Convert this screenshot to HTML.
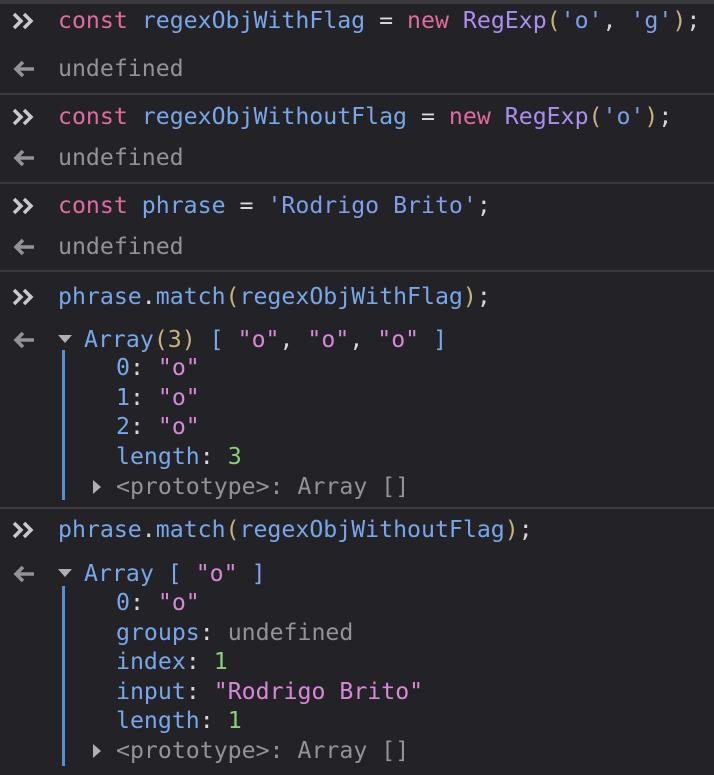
<html><head><style>
body{margin:0;background:#232327;width:714px;height:775px;overflow:hidden;position:relative;font-family:"DejaVu Sans Mono","Liberation Mono",monospace;font-size:23.2px;color:#d7d7db}
.l{position:absolute;left:58px;height:30px;line-height:30px;white-space:pre}
.c{left:116px}
.sep{position:absolute;left:0;width:714px;height:2px;background:#3a3a3f}
.k{color:#e26aa0}.i{color:#77a7ea}.f{color:#ab8ef2}.s{color:#7b9fe8}.p{color:#c8b27c}.o{color:#d888d8}.n{color:#86d274}.u{color:#939397}.w{color:#d7d7db}
.vl{position:absolute;left:62px;width:3px;background:#5a8fd0}
.proto{color:#939397}
</style></head><body>
<div class="sep" style="top:0;height:4px"></div>
<div class="sep" style="top:93px"></div>
<div class="sep" style="top:182px"></div>
<div class="sep" style="top:270px"></div>
<div class="sep" style="top:507px"></div>

<svg width="714" height="775" style="position:absolute;left:0;top:0" fill="none" stroke="#c9c9cd" stroke-width="3.5">
<g id="in"><path d="M14 14l7 7-7 7M24 14l7 7-7 7"/></g>
<use href="#in" y="96"/><use href="#in" y="185"/><use href="#in" y="276"/><use href="#in" y="509"/>
<g id="out" stroke="#939397"><path d="M34 69H16M23 62l-7 7 7 7"/></g>
<use href="#out" y="89"/><use href="#out" y="178"/><use href="#out" y="271"/><use href="#out" y="505"/>
<path d="M58 335h14l-7 8z M58 569h14l-7 8z" fill="#b0b0b4" stroke="none"/>
<path d="M93 480v14l8-7z M93 744v14l8-7z" fill="#b0b0b4" stroke="none"/>
</svg>
<div class="vl" style="top:350px;height:150px"></div>
<div class="vl" style="top:586px;height:180px"></div>

<div class="l" style="top:6px"><span class="k">const</span> <span class="i">regexObjWithFlag</span> = <span class="k">new</span> <span class="f">RegExp</span><span class="p">(</span><span class="s">'o'</span>, <span class="s">'g'</span><span class="p">)</span>;</div>
<div class="l u" style="top:54px">undefined</div>
<div class="l" style="top:102px"><span class="k">const</span> <span class="i">regexObjWithoutFlag</span> = <span class="k">new</span> <span class="f">RegExp</span><span class="p">(</span><span class="s">'o'</span><span class="p">)</span>;</div>
<div class="l u" style="top:143px">undefined</div>
<div class="l" style="top:191px"><span class="k">const</span> <span class="i">phrase</span> = <span class="s">'Rodrigo Brito'</span>;</div>
<div class="l u" style="top:232px">undefined</div>
<div class="l" style="top:282px"><span class="i">phrase</span>.<span class="i">match</span><span class="p">(</span><span class="i">regexObjWithFlag</span><span class="p">)</span>;</div>
<div class="l" style="top:325px;left:84px"><span class="i">Array</span><span class="p">(3)</span> <span class="i">[</span> <span class="o">"o"</span>, <span class="o">"o"</span>, <span class="o">"o"</span> <span class="i">]</span></div>
<div class="l c" style="top:353px"><span class="i">0</span>: <span class="o">"o"</span></div>
<div class="l c" style="top:383px"><span class="i">1</span>: <span class="o">"o"</span></div>
<div class="l c" style="top:412px"><span class="i">2</span>: <span class="o">"o"</span></div>
<div class="l c" style="top:442px"><span class="i">length</span>: <span class="n">3</span></div>
<div class="l c proto" style="top:472px">&lt;prototype&gt;: Array []</div>
<div class="l" style="top:515px"><span class="i">phrase</span>.<span class="i">match</span><span class="p">(</span><span class="i">regexObjWithoutFlag</span><span class="p">)</span>;</div>
<div class="l" style="top:559px;left:84px"><span class="i">Array</span> <span class="i">[</span> <span class="o">"o"</span> <span class="i">]</span></div>
<div class="l c" style="top:588px"><span class="i">0</span>: <span class="o">"o"</span></div>
<div class="l c" style="top:618px"><span class="i">groups</span>: <span class="u">undefined</span></div>
<div class="l c" style="top:647px"><span class="i">index</span>: <span class="n">1</span></div>
<div class="l c" style="top:677px"><span class="i">input</span>: <span class="o">"Rodrigo Brito"</span></div>
<div class="l c" style="top:706px"><span class="i">length</span>: <span class="n">1</span></div>
<div class="l c proto" style="top:736px">&lt;prototype&gt;: Array []</div>
</body></html>
